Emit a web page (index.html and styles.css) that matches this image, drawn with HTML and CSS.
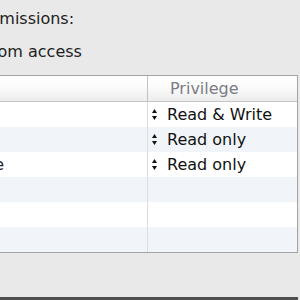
FILE: index.html
```html
<!DOCTYPE html>
<html>
<head>
<meta charset="utf-8">
<link rel="stylesheet" href="styles.css">
</head>
<body>
<div class="dialog">
  <p class="label">Sharing &amp; Permissions:</p>
  <p class="access">You have custom access</p>
  <div class="perm-table">
    <div class="row head">
      <div class="cell name">Name</div>
      <div class="cell priv">Privilege</div>
    </div>
    <div class="row">
      <div class="cell name">me (Me)</div>
      <div class="cell priv"><svg class="updown" width="5" height="11" viewBox="0 0 5 11"><path d="M0 4 L2.5 0 L5 4 Z M0 7 L5 7 L2.5 11 Z"/></svg><span>Read &amp; Write</span></div>
    </div>
    <div class="row alt">
      <div class="cell name">staff</div>
      <div class="cell priv"><svg class="updown" width="5" height="11" viewBox="0 0 5 11"><path d="M0 4 L2.5 0 L5 4 Z M0 7 L5 7 L2.5 11 Z"/></svg><span>Read only</span></div>
    </div>
    <div class="row">
      <div class="cell name">everyone</div>
      <div class="cell priv"><svg class="updown" width="5" height="11" viewBox="0 0 5 11"><path d="M0 4 L2.5 0 L5 4 Z M0 7 L5 7 L2.5 11 Z"/></svg><span>Read only</span></div>
    </div>
    <div class="row alt">
      <div class="cell name"></div>
      <div class="cell priv"></div>
    </div>
    <div class="row">
      <div class="cell name"></div>
      <div class="cell priv"></div>
    </div>
    <div class="row alt">
      <div class="cell name"></div>
      <div class="cell priv"></div>
    </div>
  </div>
  <div class="footer"></div>
</div>
</body>
</html>
```
FILE: styles.css
```css
html, body {
  margin: 0;
  padding: 0;
  background: #e9e9e9;
  overflow: hidden;
}
body {
  width: 300px;
  height: 300px;
  font-family: "DejaVu Sans", "Liberation Sans", sans-serif;
  font-size: 16px;
  color: #1e1e1e;
}
.dialog {
  margin-left: -130px;
  padding-right: 2px;
  padding-top: 9px;
}
.label {
  margin: 0;
  padding-left: 20px;
  line-height: 20px;
  white-space: nowrap;
}
.access {
  margin: 13px 0 0 0;
  padding-left: 17px;
  line-height: 20px;
  white-space: nowrap;
}
.perm-table {
  margin-top: 13px;
  border: 1px solid #a3a3a3;
  background: #fff;
}
.row {
  display: grid;
  grid-template-columns: 277px 1fr;
  height: 25px;
  line-height: 25px;
}
.row.alt {
  background: #f1f5fa;
}
.row.head {
  height: 25px;
  border-bottom: 1px solid #c4c4c4;
  background: linear-gradient(#ffffff, #fbfbfb 45%, #ececec);
  color: #7b7b85;
}
.row.head .cell {
  line-height: 23px;
}
.cell {
  box-sizing: border-box;
  white-space: nowrap;
  overflow: hidden;
}
.cell.name {
  padding-left: 58px;
  border-right: 1px solid #dedede;
  color: #1c2230;
}
.row.head .cell.name {
  padding-left: 22px;
  border-right: 1px solid #c2c2c2;
}
.cell.priv {
  padding-left: 4px;
  display: flex;
  align-items: center;
  gap: 10px;
  color: #111;
}
.row.head .cell.priv {
  padding-left: 22px;
  color: #7b7b85;
}
.updown {
  flex: none;
  fill: #111;
}
.footer {
  margin-top: 44px;
  margin-left: 130px;
  height: 4px;
  background: #4e4e4e;
}
```
